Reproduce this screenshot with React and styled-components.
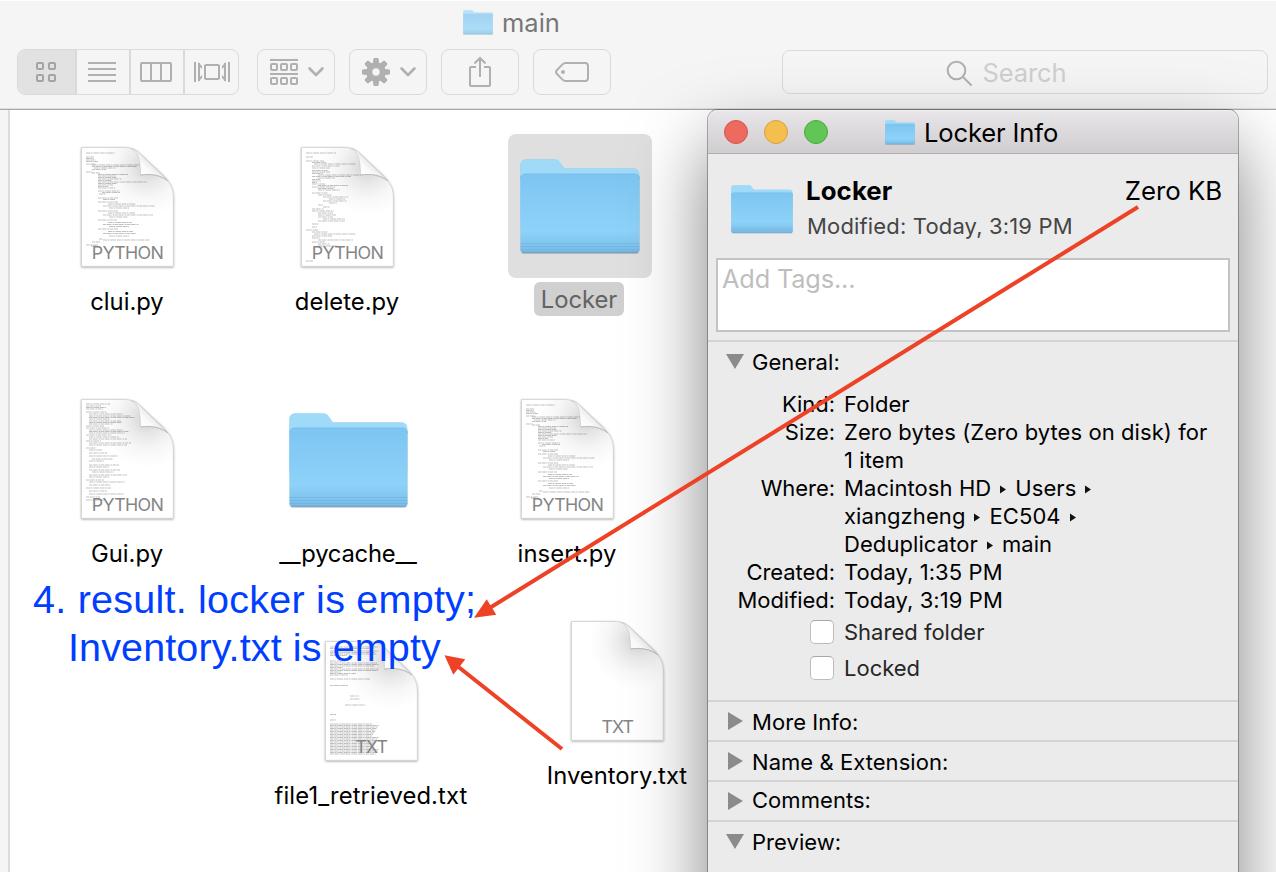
import React from 'react';
import styled, { createGlobalStyle, css } from 'styled-components';

const Global = createGlobalStyle`
  * { box-sizing: border-box; }
  body {
    margin: 0;
    background: #fff;
    font-family: Inter, "Liberation Sans", sans-serif;
    font-weight: 400;
    overflow: hidden;
  }
  svg { display: block; flex: none; }
`;

const Screen = styled.div`
  position: relative;
  width: 1276px;
  height: 872px;
  overflow: hidden;
  display: flex;
  flex-direction: column;
  background: #fff;
`;

/* ---------- Finder window ---------- */

const FinderHeader = styled.header`
  height: 110px;
  flex: none;
  background: #f5f5f5;
  border-top: 1px solid #fdfdfd;
  border-bottom: 1px solid #a9a9a9;
  box-shadow: inset 0 -1px #dedede;
`;

const FinderTitle = styled.div`
  display: flex;
  align-items: center;
  gap: 9px;
  height: 44px;
  padding: 0 0 2px 463px;
  color: #777;
  font-size: 25.5px;
`;

const Faded = styled.span`
  display: flex;
  opacity: 0.7;
`;

const Toolbar = styled.div`
  display: flex;
  align-items: center;
  padding: 4px 8px 0 17px;
  color: #b0b0b0;
`;

const outline = css`
  border: 1px solid #dadada;
  border-radius: 8px;
  height: 46px;
`;

const Segments = styled.div`
  ${outline}
  display: flex;
  width: 222px;
  overflow: hidden;
  margin-right: 18px;
`;

const Segment = styled.div`
  flex: none;
  width: ${(p) => p.$width}px;
  display: flex;
  align-items: center;
  padding-left: ${(p) => p.$inset}px;
  background: ${(p) => (p.$active ? '#e2e2e2' : 'transparent')};
  color: ${(p) => (p.$active ? '#a4a4a4' : 'inherit')};
  & + & { border-left: 2px solid #dadada; }
`;

const ToolButton = styled.div`
  ${outline}
  width: 78px;
  margin-right: 14px;
  display: flex;
  align-items: center;
  justify-content: ${(p) => (p.$menu ? 'flex-start' : 'center')};
  gap: ${(p) => (p.$menu ? 10 : 0)}px;
  padding-left: ${(p) => (p.$menu ? 12 : 0)}px;
`;

const SearchField = styled.div`
  ${outline}
  height: 44px;
  width: 486px;
  margin-left: auto;
  display: flex;
  align-items: center;
  justify-content: center;
  gap: 10px;
  padding: 1px 37px 0 0;
  color: #cfcfcf;
  font-size: 25.5px;
  letter-spacing: -0.1px;
`;

const FinderBody = styled.div`
  flex: 1;
  display: flex;
`;

const SidebarEdge = styled.div`
  width: 10px;
  background: #f5f5f5;
  border-right: 2px solid #dcdcdc;
`;

const IconCanvas = styled.main`
  position: relative;
  flex: 1;
`;

const FileItem = styled.div`
  position: absolute;
  left: ${(p) => p.$x}px;
  top: ${(p) => p.$y}px;
  width: 220px;
  margin-left: -110px;
  display: flex;
  flex-direction: column;
  align-items: center;
`;

const Thumb = styled.div`
  width: 144px;
  height: 144px;
  padding-top: ${(p) => p.$drop}px;
  border-radius: 8px;
  display: flex;
  align-items: center;
  justify-content: center;
  background: ${(p) => (p.$selected ? '#dfdfdf' : 'transparent')};
`;

const FileName = styled.div`
  margin-top: ${(p) => (p.$selected ? 4 : 7)}px;
  margin-right: ${(p) => (p.$selected ? 2 : 0)}px;
  height: 34px;
  line-height: ${(p) => (p.$selected ? 36 : 34)}px;
  padding: 0 7px;
  border-radius: 6px;
  font-size: 23.8px;
  white-space: nowrap;
  letter-spacing: ${(p) => p.$track || 0}px;
  color: ${(p) => (p.$selected ? '#636363' : '#000')};
  background: ${(p) => (p.$selected ? '#d0d0d0' : 'transparent')};
`;

/* ---------- Info window ---------- */

const InfoWindow = styled.section`
  position: absolute;
  left: 708px;
  top: 110px;
  width: 530px;
  height: 860px;
  display: flex;
  flex-direction: column;
  background: #ebebeb;
  border-radius: 10px 10px 0 0;
  box-shadow: 0 0 0 1px rgba(0, 0, 0, 0.3), 0 36px 76px rgba(0, 0, 0, 0.5);
`;

const TitleBar = styled.div`
  height: 44px;
  flex: none;
  display: flex;
  align-items: center;
  padding-left: 16px;
  border-radius: 10px 10px 0 0;
  border-bottom: 1px solid #b0aeb0;
  background: linear-gradient(#e9e6e9, #d0cdd0);
  box-shadow: inset 0 1px #f3f2f3;
`;

const Light = styled.span`
  width: 24px;
  height: 24px;
  margin-right: 16px;
  border-radius: 50%;
  background: ${(p) => p.$fill};
  border: 1px solid ${(p) => p.$edge};
`;

const WindowTitle = styled.div`
  display: flex;
  align-items: center;
  gap: 9px;
  margin-left: 41px;
  padding-top: 2px;
  font-size: 25.6px;
  letter-spacing: -0.15px;
`;

const Summary = styled.div`
  display: flex;
  height: 104px;
  flex: none;
  padding: 19px 16px 0 23px;
`;

const SummaryIcon = styled.div`
  padding-top: 12px;
  margin-right: 13px;
`;

const SummaryText = styled.div`
  flex: 1;
`;

const SummaryLine = styled.div`
  display: flex;
  justify-content: space-between;
  line-height: 36px;
  font-size: 25.8px;
  letter-spacing: -0.05px;
`;

const Strong = styled.strong`
  font-weight: 700;
  font-size: 25.8px;
  letter-spacing: 0.1px;
`;

const Muted = styled.div`
  padding-left: 1px;
  line-height: 34px;
  font-size: 22px;
  color: #454545;
  letter-spacing: 0.16px;
`;

const TagsField = styled.div`
  flex: none;
  margin: 0 8px 8px;
  height: 74px;
  padding: 1px 4px;
  border: 2px solid #c3c3c3;
  background: #fff;
  color: #bebebe;
  font-size: 25.3px;
  line-height: 36px;
  letter-spacing: -0.15px;
`;

const Section = styled.div`
  flex: none;
  height: ${(p) => p.$height}px;
  border-top: 2px solid #d4d4d4;
`;

const SectionHead = styled.div`
  display: flex;
  align-items: center;
  padding-left: 18px;
  height: 38px;
  font-size: 22px;
  letter-spacing: 0.05px;
`;

const HeadLabel = styled.span`
  margin: ${(p) => p.$drop || 0}px 0 0 8px;
  line-height: 36px;
`;

const Facts = styled.dl`
  display: grid;
  grid-template-columns: 127px 1fr;
  column-gap: 9px;
  margin: 10px 0 0;
  line-height: 28px;
  font-size: 22px;
  letter-spacing: 0.08px;
`;

const FactName = styled.dt`
  text-align: right;
  white-space: nowrap;
  letter-spacing: -0.05px;
`;

const FactValue = styled.dd`
  margin: 0;
  white-space: nowrap;
`;

const PathStep = styled.div`
  display: flex;
  align-items: center;
  gap: 9px;
`;

const CheckRow = styled.div`
  display: flex;
  align-items: center;
  gap: 10px;
  height: 36px;
  padding-left: 102px;
  font-size: 22px;
  color: #262626;
`;

const CheckBox = styled.span`
  width: 24px;
  height: 24px;
  border: 1px solid #bcbcbc;
  border-top-color: #a8a8a8;
  border-radius: 5px;
  background: #fff;
`;

/* ---------- Annotations ---------- */

const Note = styled.div`
  position: absolute;
  left: 33px;
  top: 575px;
  font-family: "Liberation Sans", Arial, sans-serif;
  font-size: 39.5px;
  line-height: 48px;
  color: #003eff;
  white-space: pre;
`;

const NoteLine = styled.div`
  padding-left: ${(p) => p.$indent || 0}px;
  letter-spacing: ${(p) => p.$track || 0}px;
`;

const Overlay = styled.svg`
  position: absolute;
  inset: 0;
  pointer-events: none;
`;

/* ---------- Drawings ---------- */

function FolderIcon({ width, height, id }) {
  return (
    <svg width={width} height={height} viewBox="0 0 120 96" preserveAspectRatio="none">
      <defs>
        <linearGradient id={id} x1="0" y1="0" x2="0" y2="1">
          <stop offset="0" stopColor="#7dc5f2" />
          <stop offset="0.72" stopColor="#8dd2f8" />
          <stop offset="0.86" stopColor="#84c8f0" />
          <stop offset="1" stopColor="#78bbe6" />
        </linearGradient>
      </defs>
      <rect x="0.5" y="14" width="119" height="81" rx="4" fill="#000" opacity="0.18" />
      <path d="M0.5 6a5.500 5.500 0 0 1 5.500-5.500H34c3 0 4.500 1 6 3.200l3 4.200c.9 1.300 1.500 1.600 3.500 1.600h67a5.500 5.500 0 0 1 5.500 5.500V60H.5z" fill="#9fdaf9" stroke="#8fcdee" strokeWidth="0.5" />
      <path d="M.5 20a5 5 0 0 1 5-5h109a5 5 0 0 1 5 5v70a3.500 3.500 0 0 1-3.500 3.500H4A3.500 3.500 0 0 1 .5 90z" fill={`url(#${id})`} />
      <path d="M.5 20a5 5 0 0 1 5-5h109a5 5 0 0 1 5 5" fill="none" stroke="#72b7e4" strokeWidth="0.7" />
      <path d="M.5 84.500h119M.5 87.500h119M.5 90.500h119" stroke="#62a8d8" strokeWidth="0.9" opacity="0.45" />
      <path d="M2 93.200h116" stroke="#5a9fcd" strokeWidth="0.9" />
    </svg>
  );
}

/* Each entry is [y, x, width] of one line of miniature text on the page. */
const codeLines = {
  clui: [
    [6, 5, 29], [10, 5, 8], [11.500, 5, 8], [13, 5, 10], [14.500, 5, 12], [17, 5, 10], [18, 11, 48], [19.500, 11, 45], [21, 13, 22], [22.500, 11, 14],
    [25, 5, 7], [26, 11, 8], [27.500, 17, 30], [29, 17, 18], [30.500, 17, 19], [32, 17, 24], [33.500, 17, 14], [35, 17, 49], [36.500, 17, 19], [38, 17, 15], [39.500, 17, 10], [41, 17, 17],
    [44, 17, 22], [45.500, 21, 18], [47, 18, 7], [51, 17, 20], [52.500, 22, 12], [55, 17, 20], [57, 27, 28], [59, 22, 52], [61, 28, 20],
    [64, 17, 20], [66, 27, 27], [68, 22, 50], [70, 28, 19], [73, 17, 19], [75.500, 27, 24], [77.500, 22, 36], [79.500, 28, 20], [82, 17, 20], [84.500, 27, 25], [86.500, 22, 33], [89, 28, 20], [92, 18, 4], [93, 22, 47], [95, 11, 8], [98, 5, 12], [99, 10, 5],
  ],
  remove: [
    [6, 5, 30], [10, 5, 7], [14, 5, 18], [15.500, 11, 14], [17, 13, 42], [19, 11, 28], [21, 11, 18], [23.500, 11, 16], [25, 11, 18], [26.500, 11, 11], [28, 17, 43], [29.500, 11, 39], [31, 17, 17], [32.500, 11, 8], [34, 11, 9], [35.500, 11, 5], [37, 11, 13], [38.500, 17, 30], [40, 11, 23], [41.500, 17, 16], [43, 17, 22],
    [46, 11, 16], [48, 17, 14], [50, 22, 25], [52, 28, 16], [54, 22, 24], [56, 28, 8], [58, 17, 5], [60, 22, 7], [62, 11, 12], [64, 11, 22], [66, 17, 15], [68, 17, 18], [70, 17, 15], [72, 22, 22], [74, 17, 27], [77, 11, 7], [80, 11, 5], [83, 5, 12], [85, 11, 16], [87, 13, 42], [89, 11, 20], [91, 11, 8], [93, 17, 35], [95, 11, 13], [97, 17, 12], [99, 17, 20], [114, 5, 7],
  ],
  gui: [
    [5, 5, 24], [7, 5, 15], [8.500, 5, 20], [10, 5, 17], [13, 5, 21], [15, 8, 34], [17, 8, 42], [18.500, 8, 46], [20, 8, 21], [22, 8, 32], [23.500, 8, 33], [25, 8, 24], [27, 5, 18], [29, 5, 23], [31, 8, 34], [32.500, 8, 40], [34, 8, 36], [36, 5, 25], [38, 8, 30], [40, 8, 38], [42, 5, 15], [44, 8, 42], [46, 8, 38], [49, 5, 10], [51, 8, 13], [54, 8, 18], [57, 8, 29], [60, 11, 21], [62, 8, 15], [66, 8, 30], [68, 8, 20], [71, 8, 31], [73, 11, 22], [76, 8, 38], [78, 8, 20], [81, 5, 18], [83, 8, 36], [86, 8, 22], [89, 5, 25], [92, 8, 18], [95, 8, 35], [98, 5, 14], [101, 5, 20],
  ],
  retrieved: [
    [6, 5, 48], [7.500, 5, 44], [10, 5, 49], [11.500, 5, 45], [13, 5, 47], [14.500, 5, 17], [20, 5, 15], [22, 5, 47], [23.500, 5, 49], [25, 5, 44], [26.500, 5, 12], [28, 5, 49], [29.500, 5, 48], [31, 5, 11], [32.500, 5, 26], [34, 5, 18], [38, 5, 40], [44.500, 5, 18], [55, 25, 9], [58, 25, 10], [64, 20, 20], [73.500, 5, 6], [79, 5, 6],
    ...Array.from({ length: 21 }, (_, i) => [83 + i * 1.5, 5, 42 + ((i * 7) % 8)]),
  ],
  blank: [],
};

function DocumentIcon({ kind, lines, id }) {
  return (
    <svg width="99" height="128" viewBox="-3 -3 99 128">
      <defs>
        <radialGradient id={`${id}shade`} gradientUnits="userSpaceOnUse" cx="66" cy="20" r="48">
          <stop offset="0.1" stopColor="#d8d8d8" />
          <stop offset="0.35" stopColor="#e9e9e9" />
          <stop offset="0.65" stopColor="#f7f7f7" />
          <stop offset="1" stopColor="#ffffff" />
        </radialGradient>
        <linearGradient id={`${id}fold`} gradientUnits="userSpaceOnUse" x1="60" y1="28" x2="72" y2="16">
          <stop offset="0" stopColor="#ffffff" />
          <stop offset="0.5" stopColor="#fafafa" />
          <stop offset="1" stopColor="#e6e6e6" />
        </linearGradient>
        <filter id={`${id}drop`} x="-10%" y="-10%" width="120%" height="120%">
          <feDropShadow dx="0" dy="0.8" stdDeviation="1" floodColor="#000" floodOpacity="0.38" />
        </filter>
      </defs>
      <path
        d="M.5.5H42C51 .5 55 2.500 60 7.500L82 28C89 35 92.300 41 92.300 50V119.300H.5z"
        fill={`url(#${id}shade)`}
        stroke="#c4c4c4"
        strokeWidth="0.6"
        filter={`url(#${id}drop)`}
      />
      {lines.map(([y, x, w], i) => (
        <line
          key={i}
          x1={x}
          x2={x + w}
          y1={y}
          y2={y}
          stroke="#444"
          strokeWidth="0.6"
          strokeDasharray={i % 2 ? '3 .6 5 .9 2 .5' : '4 .5 2 .8 6 .7'}
          opacity="0.55"
        />
      ))}
      <path d="M50 1.500C57 5 59.500 12 59.500 28C70 26.500 79 28 87 34L60 7.500C56.500 4 54 2.500 50 1.500z" fill={`url(#${id}fold)`} stroke="#c6c6c6" strokeWidth="0.6" />
      <path d="M59.500 28C70 26.500 79 28 87 34" fill="none" stroke="#b8b8b8" strokeWidth="0.9" />
      <text x="46.800" y="112.300" textAnchor="middle" fontFamily="Inter, sans-serif" fontWeight="400" fontSize="17.8" fill="#858585" textLength={kind === 'TXT' ? 32.5 : 72}>
        {kind}
      </text>
    </svg>
  );
}

const squares = (xs, y, size) => xs.map((x) => <rect key={`${x}-${y}`} x={x} y={y} width={size} height={size} rx="1" />);

const GridIcon = () => (
  <svg width="20" height="20" viewBox="0 0 20 20" fill="none" stroke="currentColor" strokeWidth="2">
    {squares([1, 13], 1, 6)}
    {squares([1, 13], 13, 6)}
  </svg>
);

const ListIcon = () => (
  <svg width="28" height="20" viewBox="0 0 28 20" stroke="currentColor" strokeWidth="2">
    <path d="M0 1h28M0 7h28M0 13h28M0 19h28" />
  </svg>
);

const ColumnsIcon = () => (
  <svg width="32" height="20" viewBox="0 0 32 20" fill="none" stroke="currentColor" strokeWidth="2">
    <rect x="1" y="1" width="30" height="18" rx="1" />
    <path d="M11 1v18M21 1v18" />
  </svg>
);

const CoverFlowIcon = () => (
  <svg width="36" height="20" viewBox="0 0 36 20" fill="none" stroke="currentColor" strokeWidth="2">
    <rect x="11" y="3" width="14" height="14" rx="1" />
    <path d="M1 0v20M35 0v20" />
    <path d="M5 1v18M31 1v18" />
    <path d="M4 0l4 4v3l-2-2v10l2-2v3l-4 4zM32 0l-4 4v3l2-2v10l-2-2v3l4 4z" fill="currentColor" stroke="none" />
  </svg>
);

const ArrangeIcon = () => (
  <svg width="28" height="26" viewBox="0 0 28 26" fill="none" stroke="currentColor" strokeWidth="2">
    <path d="M0 1h28M0 15h28" />
    {squares([1, 11, 21], 5, 6)}
    {squares([1, 11, 21], 19, 6)}
  </svg>
);

const Chevron = () => (
  <svg width="16" height="10" viewBox="0 0 16 10" fill="none" stroke="currentColor" strokeWidth="2.600" strokeLinecap="round" strokeLinejoin="round">
    <path d="M1.600 1.500L8 8l6.400-6.500" />
  </svg>
);

const GearIcon = () => (
  <svg width="28" height="28" viewBox="-14 -14 28 28" fill="currentColor">
    {[0, 45, 90, 135, 180, 225, 270, 315].map((a) => (
      <path key={a} d="M-3.200-8L-2.600-13.300Q-2.500-14-1.800-14H1.800Q2.500-14 2.600-13.300L3.200-8z" transform={`rotate(${a})`} />
    ))}
    <circle r="6.700" fill="none" stroke="currentColor" strokeWidth="6" />
  </svg>
);

const ShareIcon = () => (
  <svg width="24" height="32" viewBox="0 0 24 32" fill="none" stroke="currentColor" strokeWidth="2">
    <path d="M8 11H3a1 1 0 0 0-1 1v17a1 1 0 0 0 1 1h18a1 1 0 0 0 1-1V12a1 1 0 0 0-1-1h-5M12 21V2M6.500 7.500L12 2l5.500 5.500" />
  </svg>
);

const TagIcon = () => (
  <svg width="34" height="20" viewBox="0 0 34 20" fill="none" stroke="currentColor" strokeWidth="2">
    <path d="M10.500 1H30a3 3 0 0 1 3 3v12a3 3 0 0 1-3 3H10.500c-1.300 0-2-.4-3-1.400L2 12c-1.300-1.300-1.300-2.700 0-4L7.500 2.400C8.500 1.400 9.200 1 10.500 1z" />
    <circle cx="8" cy="10" r="2" fill="currentColor" stroke="none" />
  </svg>
);

const SearchIcon = () => (
  <svg width="26" height="26" viewBox="0 0 26 26" fill="none" stroke="#b0b0b0" strokeWidth="2" strokeLinecap="round">
    <circle cx="10.500" cy="10.500" r="8.800" />
    <path d="M17 17l8 8" />
  </svg>
);

const Disclosure = ({ open }) => (
  <svg width="18" height="18" viewBox="0 0 18 18" fill="#8b8b8b">
    {open ? <path d="M0 2h18L9 17z" /> : <path d="M2 0v18l15-9z" />}
  </svg>
);

const PathArrow = () => (
  <svg width="6" height="12" viewBox="0 0 6 12" fill="#111">
    <path d="M0 3.500v8l6-4z" />
  </svg>
);

/* ---------- Content ---------- */

const files = [
  { name: 'clui.py', x: 117, y: 24, drop: 4, kind: 'PYTHON', lines: 'clui', track: -0.02 },
  { name: 'delete.py', x: 337, y: 24, drop: 4, kind: 'PYTHON', lines: 'remove', track: 0.05 },
  { name: 'Locker', x: 570, y: 24, drop: 2, folder: true, selected: true, track: -0.05 },
  { name: 'Gui.py', x: 117, y: 276, drop: 4, kind: 'PYTHON', lines: 'gui', track: 0.05 },
  { name: '__pycache__', x: 338, y: 276, drop: 6, folder: true, track: -0.22 },
  { name: 'insert.py', x: 557, y: 276, drop: 4, kind: 'PYTHON', lines: 'clui', track: 0.15 },
  { name: 'file1_retrieved.txt', x: 361, y: 518, drop: 4, kind: 'TXT', lines: 'retrieved', track: 0.12 },
  { name: 'Inventory.txt', x: 607, y: 498, drop: 4, kind: 'TXT', lines: 'blank', track: 0 },
];

const path = [['Macintosh HD', 'Users', ''], ['xiangzheng', 'EC504', ''], ['Deduplicator', 'main']];

function Where() {
  return path.map((row, r) => (
    <PathStep key={r}>
      {row.map((step, i) => (
        <React.Fragment key={i}>
          {i > 0 && <PathArrow />}
          {step && <span>{step}</span>}
        </React.Fragment>
      ))}
    </PathStep>
  ));
}

export default function App() {
  return (
    <>
      <Global />
      <Screen>
        <FinderHeader>
          <FinderTitle>
            <Faded><FolderIcon width={30} height={25} id="title-folder" /></Faded>
            <span>main</span>
          </FinderTitle>
          <Toolbar>
            <Segments>
              <Segment $width={57} $inset={18} $active><GridIcon /></Segment>
              <Segment $width={54} $inset={11}><ListIcon /></Segment>
              <Segment $width={54} $inset={9}><ColumnsIcon /></Segment>
              <Segment $width={55} $inset={9}><CoverFlowIcon /></Segment>
            </Segments>
            <ToolButton $menu><ArrangeIcon /><Chevron /></ToolButton>
            <ToolButton $menu><GearIcon /><Chevron /></ToolButton>
            <ToolButton><ShareIcon /></ToolButton>
            <ToolButton><TagIcon /></ToolButton>
            <SearchField><SearchIcon /><span>Search</span></SearchField>
          </Toolbar>
        </FinderHeader>

        <FinderBody>
          <SidebarEdge />
          <IconCanvas>
            {files.map((f, i) => (
              <FileItem key={f.name} $x={f.x} $y={f.y}>
                <Thumb $selected={f.selected} $drop={f.drop}>
                  {f.folder
                    ? <FolderIcon width={f.selected ? 120 : 119} height={96} id={`folder${i}`} />
                    : <DocumentIcon kind={f.kind} lines={codeLines[f.lines]} id={`doc${i}`} />}
                </Thumb>
                <FileName $selected={f.selected} $track={f.track}>{f.name}</FileName>
              </FileItem>
            ))}
          </IconCanvas>
        </FinderBody>

        <InfoWindow>
          <TitleBar>
            <Light $fill="#ee6a5f" $edge="#d5544a" />
            <Light $fill="#f5bf4f" $edge="#d9a03c" />
            <Light $fill="#62c654" $edge="#4ba73f" />
            <WindowTitle>
              <FolderIcon width={30} height={25} id="bar-folder" />
              <span>Locker Info</span>
            </WindowTitle>
          </TitleBar>
          <Summary>
            <SummaryIcon><FolderIcon width={62} height={49} id="summary-folder" /></SummaryIcon>
            <SummaryText>
              <SummaryLine>
                <Strong>Locker</Strong>
                <span>Zero KB</span>
              </SummaryLine>
              <Muted>Modified: Today, 3:19 PM</Muted>
            </SummaryText>
          </Summary>
          <TagsField>Add Tags...</TagsField>
          <Section $height={360}>
            <SectionHead><Disclosure open /><HeadLabel $drop={2}>General:</HeadLabel></SectionHead>
            <Facts>
              <FactName>Kind:</FactName><FactValue>Folder</FactValue>
              <FactName>Size:</FactName><FactValue>Zero bytes (Zero bytes on disk) for<br />1 item</FactValue>
              <FactName>Where:</FactName><FactValue><Where /></FactValue>
              <FactName>Created:</FactName><FactValue>Today, 1:35 PM</FactValue>
              <FactName>Modified:</FactName><FactValue>Today, 3:19 PM</FactValue>
            </Facts>
            <CheckRow><CheckBox />Shared folder</CheckRow>
            <CheckRow><CheckBox />Locked</CheckRow>
          </Section>
          <Section $height={40}><SectionHead><Disclosure /><HeadLabel $drop={2}>More Info:</HeadLabel></SectionHead></Section>
          <Section $height={40}><SectionHead><Disclosure /><HeadLabel $drop={2}>Name &amp; Extension:</HeadLabel></SectionHead></Section>
          <Section $height={40}><SectionHead><Disclosure /><HeadLabel $drop={-2}>Comments:</HeadLabel></SectionHead></Section>
          <Section $height={60}><SectionHead><Disclosure open /><HeadLabel $drop={2}>Preview:</HeadLabel></SectionHead></Section>
        </InfoWindow>

        <Note>
          <NoteLine $track={0.24}>4. result. locker is empty;</NoteLine>
          <NoteLine $indent={35} $track={0.12}>Inventory.txt is empty</NoteLine>
        </Note>

        <Overlay width="1276" height="872" viewBox="0 0 1276 872" fill="#ee4226" stroke="#ee4226">
          <path d="M1138 207L488 609" strokeWidth="4" />
          <path d="M474 617.700L486.700 599.300L496.300 614.700z" stroke="none" />
          <path d="M562 749L456 665" strokeWidth="4" />
          <path d="M444.500 655.300L465.300 659.300L453.300 674.700z" stroke="none" />
        </Overlay>
      </Screen>
    </>
  );
}
